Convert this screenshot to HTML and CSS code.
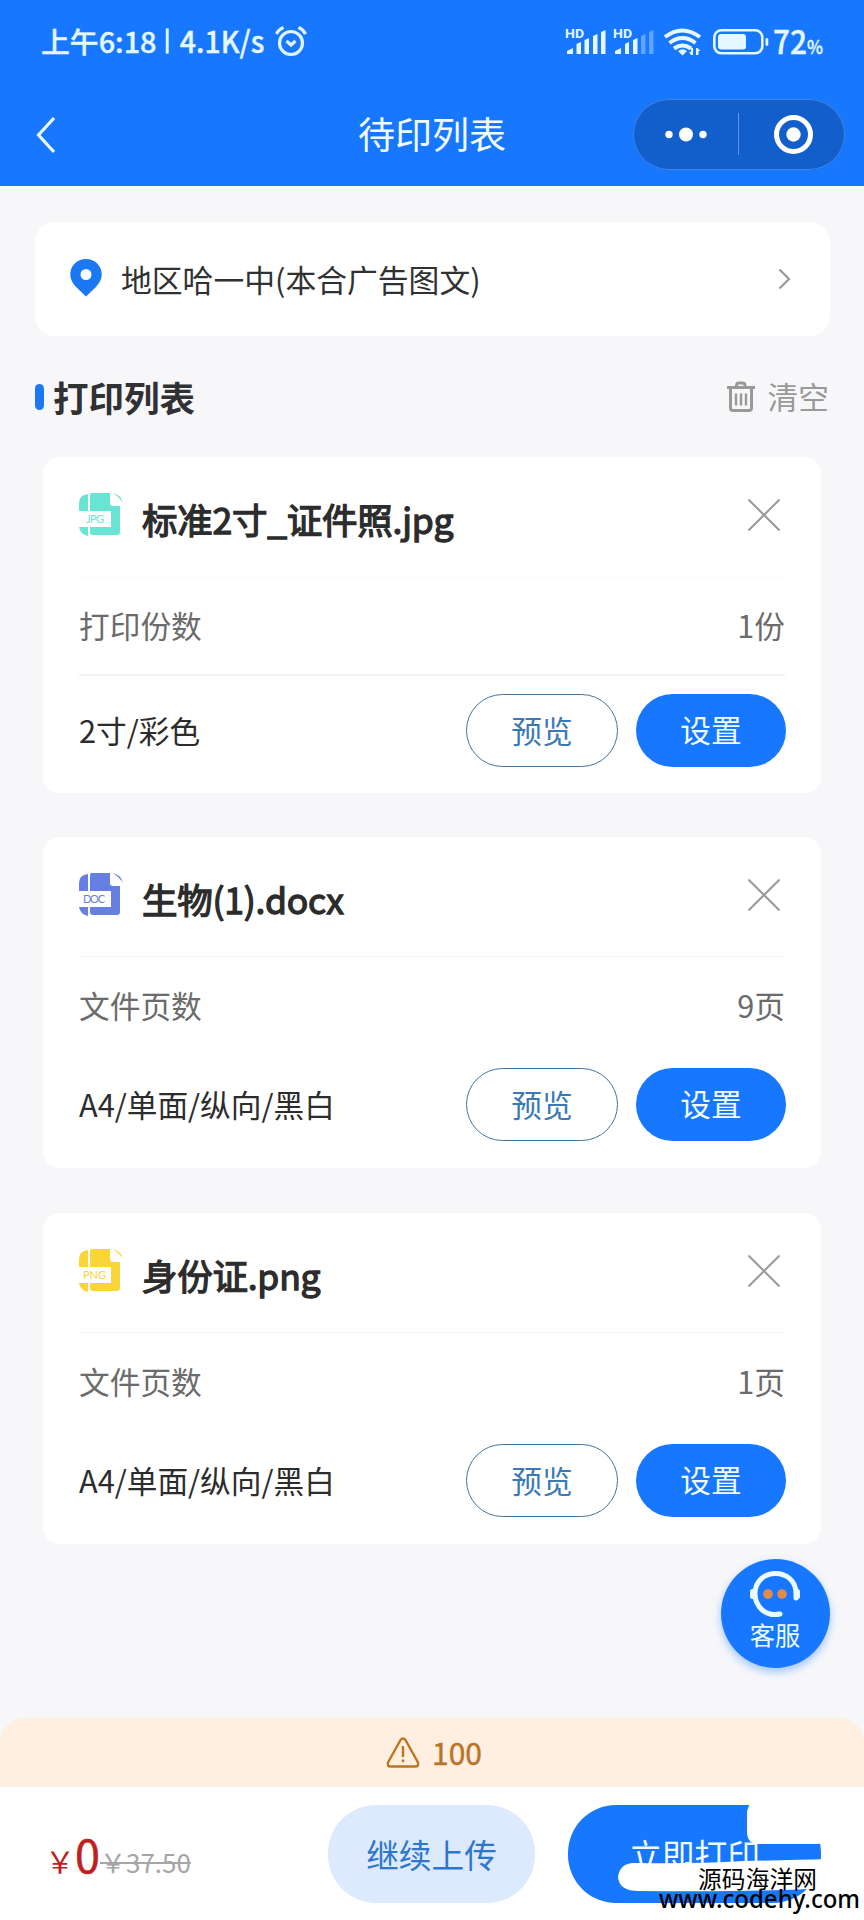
FILE: index.html
```html
<!DOCTYPE html>
<html lang="zh-CN">
<head>
<meta charset="utf-8">
<title>待印列表</title>
<link rel="stylesheet" href="styles.css">
</head>
<body>
<header class="header">
  <div class="status">
    <svg class="status-left" width="240" height="60" viewBox="0 0 240 60">
      <text class="status-text" x="-1" y="41" font-size="29" textLength="119" lengthAdjust="spacingAndGlyphs">上午6:18</text>
      <rect x="127.500" y="16" width="3" height="26" fill="#dff6ff"/>
      <text class="status-text" x="142" y="41" font-size="31" textLength="87" lengthAdjust="spacingAndGlyphs">4.1K/s</text>
    </svg>
    <svg class="status-alarm" width="32" height="32" viewBox="0 0 32 32" fill="none" stroke="#dff6ff" stroke-width="3.200">
      <circle cx="16" cy="17" r="11.500"/>
      <path d="M11.500 15l4.500 4 4.500-4"/>
      <path d="M1.500 8q2-4.500 7-6.500M30.500 8q-2-4.500-7-6.500"/>
    </svg>
    <svg class="status-right" width="262" height="60" viewBox="0 -16 262 60" fill="#e4f8ff">
      <text class="hd" x="0" y="10" font-size="12.500" textLength="19" lengthAdjust="spacingAndGlyphs">HD</text>
      <path d="M2 26v-3l6-3v6zM11.500 26v-10l4.500-2v12zM19.500 26v-14l4.500-2v16zM28 26V8l4.500-2v20zM36 26V4l4.500-2v24z"/>
      <text class="hd" x="48" y="10" font-size="12.500" textLength="19" lengthAdjust="spacingAndGlyphs">HD</text>
      <path d="M50 26v-3l6-3v6zM60 26v-10l4-2v12zM68 26v-14l4.500-2v16z"/>
      <path d="M76 26V8l4.500-2v20zM84 26V4l4.500-2v24z" opacity=".35"/>
      <g fill="none" stroke="#e4f8ff" stroke-width="4">
        <path d="M100 9q17-13 35 0M104.500 15q13-10 26 0M109 20.500q8.500-6 17 0"/>
      </g>
      <path d="M113 23q4.500-3.500 9 0l-4.500 4.500zM128 20v7h-2l-2-3h2v-4zM131 27v-7h1.500l3 3h-2v4z"/>
      <rect x="149.300" y="2.300" width="48" height="23" rx="7" fill="none" stroke="#e4f8ff" stroke-width="2.600"/>
      <rect x="153" y="6" width="28" height="15.500" rx="3"/>
      <rect x="200.500" y="10" width="2.800" height="8" rx="1.400"/>
      <text class="status-text" x="208" y="25.500" font-size="32" textLength="34" lengthAdjust="spacingAndGlyphs">72</text>
      <text class="status-text" x="242" y="25.500" font-size="19" textLength="16" lengthAdjust="spacingAndGlyphs">%</text>
    </svg>
  </div>
  <div class="nav">
    <svg class="back" width="22" height="38" viewBox="0 0 22 38" fill="none" stroke="#eafaff" stroke-width="3.200"><path d="M18 2L2.500 19 18 36"/></svg>
    <h1 class="nav-title">待印列表</h1>
    <div class="capsule">
      <svg width="212" height="71" viewBox="0 0 212 71" fill="#fff">
        <circle cx="36" cy="35.500" r="3.700"/><circle cx="53" cy="35.500" r="7"/><circle cx="70" cy="35.500" r="3.700"/>
        <rect x="105" y="14" width="1" height="42" opacity=".35"/>
        <circle cx="160.500" cy="35.500" r="17" fill="none" stroke="#fff" stroke-width="5"/><circle cx="160.500" cy="35.500" r="7.200"/>
      </svg>
    </div>
  </div>
</header>

<main class="main">
  <section class="address">
    <svg class="pin" width="32" height="38" viewBox="0 0 32 38"><path fill="#1a78f2" fill-rule="evenodd" d="M16 0C7 0 .3 6.800.3 15.200c0 5.200 2.500 8.800 6 13L16 37.500l9.700-9.300c3.500-4.200 6-7.800 6-13C31.700 6.800 25 0 16 0zm0 10a5.500 5.500 0 1 1 0 11 5.500 5.500 0 0 1 0-11z"/></svg>
    <span class="address-name">地区哈一中(本合广告图文)</span>
    <svg width="13" height="22" viewBox="0 0 13 22" fill="none" stroke="#999" stroke-width="2.200"><path d="M1.500 1.500L11 11l-9.500 9.500"/></svg>
  </section>

  <div class="section-head">
    <i class="section-bar"></i>
    <h2 class="section-title">打印列表</h2>
    <svg class="trash" width="28" height="32" viewBox="0 0 28 32" fill="none" stroke="#999">
      <path stroke-width="3" d="M0 6.500h28M9.500 6V4.500q0-2.500 2.500-2.500h3.500Q18 2 18 4.500V6M3.500 6v21q0 2.500 2.500 2.500h16q2.500 0 2.500-2.500V6"/>
      <path stroke-width="2.400" d="M9 12.500v12M14 12.500v12M19 12.500v12"/>
    </svg>
    <span class="clear">清空</span>
  </div>

  <article class="card card-tall">
    <div class="card-head">
      <svg class="file jpg" width="44" height="44" viewBox="0 0 44 44">
        <path d="M9 1v17H0v-8Q0 2 9 1zM0 34h9v9Q1 41 0 34zM12 0h19v10q0 3 3 3h7v26q0 3-3 3H14q-3 0-3-3v-5h21V18H11V3q0-3 1-3zM34 0q8 2 10 10-3-5-10-10z"/>
        <text x="7" y="30" font-size="11" textLength="18">JPG</text>
      </svg>
      <h3 class="card-title">标准2寸_证件照.jpg</h3>
      <svg class="close" width="32" height="32" viewBox="0 0 32 32"><path d="M.5.500l31 31M31.500.500l-31 31"/></svg>
    </div>
    <div class="card-row"><span>打印份数</span><span>1份</span></div>
    <div class="card-actions"><span class="spec">2寸/彩色</span><span class="btn btn-line">预览</span><span class="btn btn-fill">设置</span></div>
  </article>

  <article class="card">
    <div class="card-head ruled">
      <svg class="file doc" width="44" height="44" viewBox="0 0 44 44">
        <path d="M9 1v17H0v-8Q0 2 9 1zM0 34h9v9Q1 41 0 34zM12 0h19v10q0 3 3 3h7v26q0 3-3 3H14q-3 0-3-3v-5h21V18H11V3q0-3 1-3zM34 0q8 2 10 10-3-5-10-10z"/>
        <text x="4" y="30" font-size="11" textLength="22">DOC</text>
      </svg>
      <h3 class="card-title">生物(1).docx</h3>
      <svg class="close" width="32" height="32" viewBox="0 0 32 32"><path d="M.5.500l31 31M31.500.500l-31 31"/></svg>
    </div>
    <div class="card-row"><span>文件页数</span><span>9页</span></div>
    <div class="card-actions"><span class="spec">A4/单面/纵向/黑白</span><span class="btn btn-line">预览</span><span class="btn btn-fill">设置</span></div>
  </article>

  <article class="card">
    <div class="card-head ruled">
      <svg class="file png" width="44" height="44" viewBox="0 0 44 44">
        <path d="M9 1v17H0v-8Q0 2 9 1zM0 34h9v9Q1 41 0 34zM12 0h19v10q0 3 3 3h7v26q0 3-3 3H14q-3 0-3-3v-5h21V18H11V3q0-3 1-3zM34 0q8 2 10 10-3-5-10-10z"/>
        <text x="4" y="30" font-size="11" textLength="23">PNG</text>
      </svg>
      <h3 class="card-title">身份证.png</h3>
      <svg class="close" width="32" height="32" viewBox="0 0 32 32"><path d="M.5.500l31 31M31.500.500l-31 31"/></svg>
    </div>
    <div class="card-row"><span>文件页数</span><span>1页</span></div>
    <div class="card-actions"><span class="spec">A4/单面/纵向/黑白</span><span class="btn btn-line">预览</span><span class="btn btn-fill">设置</span></div>
  </article>
</main>

<aside class="service">
  <svg width="54" height="48" viewBox="0 0 54 48" fill="none" stroke="#eafcff">
    <path stroke-width="5" stroke-linecap="round" d="M31 44C16 47 6 36 6 23.500 6 11 15.500 3.500 26.500 3.500S47 11 47 23v5"/>
    <path stroke-width="5" stroke-linecap="round" d="M3.500 21.500v5M48.500 21.500v5"/>
    <circle cx="19" cy="24" r="4.800" fill="#e5894a" stroke="none"/><circle cx="33" cy="24" r="4.800" fill="#e5894a" stroke="none"/>
  </svg>
  <span class="service-label">客服</span>
</aside>

<footer class="footer">
  <div class="notice">
    <svg width="34" height="31" viewBox="0 0 34 31" fill="none" stroke="#c0731f" stroke-width="2.400" stroke-linejoin="round">
      <path d="M14.500 3Q17 0 19.500 3L32 25.500Q33 29.500 29.500 29.500h-25Q1 29.500 2 25.500zM17 9v11M17 22.500v2.800"/>
    </svg>
    <span>100</span>
  </div>
  <div class="pay">
    <div class="price"><span class="yen">￥</span><span class="amount">0</span><s class="origin">￥37.50</s></div>
    <div class="upload">继续上传</div>
    <div class="print">立即打印</div>
  </div>
  <svg class="overlay" width="264" height="133" viewBox="0 0 264 133">
    <path fill="#fff" d="M150 16h78v38q-5 3-12 3h-57q-12 0-12-12V24zM34 76q60 1 110-2 50-1 84-2l6 5v23q-20 2-50 3-60 2-145 1-20 0-21-14 2-14 16-14z"/>
    <text class="mark" x="98" y="101" font-size="23.700" textLength="119">源码海洋网</text>
    <text class="mark mark-url" x="59" y="121" font-size="25.500" textLength="201" lengthAdjust="spacingAndGlyphs">www.codehy.com</text>
  </svg>
</footer>
</body>
</html>
```

FILE: styles.css
```css
* { box-sizing: border-box; }
body {
  margin: 0;
  width: 864px;
  height: 1920px;
  position: relative;
  display: flex;
  flex-direction: column;
  overflow: hidden;
  background: #f7f7fa;
  color: #2c2c2c;
  font-family: "Noto Sans CJK SC", sans-serif;
  font-size: 30.7px;
  line-height: 41px;
}
h1, h2, h3 { margin: 0; }
svg { display: block; flex: none; }

.header { height: 186px; flex: none; background: #1777ff; }
.status { display: flex; height: 84px; padding: 12px 37px 0 42px; }
.status-left { width: 233px; overflow: visible; }
.status-alarm { margin-top: 14px; }
.status-right { margin-left: auto; overflow: visible; }
.status-text {
  fill: #e4f8ff;
  stroke: #e4f8ff;
  stroke-width: .4px;
  font-family: "Noto Sans CJK SC", sans-serif;
  font-weight: 500;
}
.hd { font-family: Roboto, sans-serif; font-weight: 700; }
.nav {
  display: grid;
  grid-template-columns: 1fr auto 1fr;
  align-items: center;
  height: 102px;
  padding: 0 19px 0 36px;
}
.nav-title { font-size: 37px; font-weight: 400; color: #f2fcff; line-height: 50px; padding-right: 17px; margin-top: -4px; }
.capsule {
  justify-self: end;
  width: 212px;
  height: 71px;
  margin-top: -1px;
  border-radius: 36px;
  background: #125fcc;
  box-shadow: inset 0 0 0 1px #3f86e4;
}

.main { display: flex; flex-direction: column; padding: 36px 35px 0; }
.address {
  display: flex;
  align-items: center;
  height: 114px;
  width: 795px;
  padding: 0 39px 0 35px;
  border-radius: 20px;
  background: #fff;
}
.pin { margin-top: -3px; }
.address-name { flex: 1; margin-left: 19px; margin-top: -2px; font-size: 30.8px; color: #303133; }

.section-head { display: flex; align-items: center; height: 121px; width: 794px; }
.section-bar { width: 9px; height: 26px; border-radius: 5px; background: #1a78f2; }
.section-title { flex: 1; margin-left: 9px; font-size: 35.5px; font-weight: 700; line-height: 50px; color: #303133; }
.trash { margin-right: 13px; }
.clear { margin-top: -2px; color: #999; }

.card {
  display: flex;
  flex-direction: column;
  height: 331px;
  width: 778px;
  margin: 0 0 45px 8px;
  padding: 0 36px;
  border-radius: 16px;
  background: #fff;
}
.card-tall { height: 336px; margin-bottom: 44px; }
.card-head { display: flex; align-items: center; height: 120px; padding-bottom: 3px; border-bottom: 1px solid #fbfbfc; }
.ruled { border-bottom-color: #f6f6f7; }
.card-title {
  flex: 1;
  margin-left: 19px;
  padding-top: 7px;
  font-size: 35.5px;
  font-weight: 400;
  letter-spacing: -.25px;
  -webkit-text-stroke: 1.3px #2c2c2c;
  line-height: 48px;
}
.close { margin-right: 5px; stroke: #999; stroke-width: 2px; fill: none; }
.file text { font-family: Lato, sans-serif; }
.jpg { fill: #69e3d3; }
.doc { fill: #6680e2; }
.png { fill: #fbd437; }
.card-row { display: flex; justify-content: space-between; height: 93px; padding-top: 27px; color: #6b6b6b; border-bottom: 1px solid #fcfcfd; }
.card-tall .card-row { height: 99px; border-bottom: 2px solid #f1f1f2; }
.card-actions { display: flex; align-items: center; height: 73px; margin-top: 18px; }
.spec { flex: 1; margin-top: -2px; }
.btn { width: 152px; height: 73px; border-radius: 37px; line-height: 73px; text-align: center; }
.btn-line { border: 1.500px solid #41749f; line-height: 70px; color: #3b79b5; margin-right: 18px; }
.btn-fill { width: 150px; margin-right: -1px; line-height: 69px; background: #1777ff; color: #f0fcff; }

.service {
  position: absolute;
  left: 721px;
  top: 1559px;
  width: 109px;
  height: 109px;
  padding-top: 11px;
  border-radius: 50%;
  display: flex;
  flex-direction: column;
  align-items: center;
  background: #1777ff;
  box-shadow: 0 4px 9px #1777ff66;
}
.service-label { font-size: 25.3px; line-height: 32px; margin: 0 1px 0 0; color: #eafcff; }

.footer { position: absolute; left: 0; top: 1718px; width: 864px; height: 202px; background: #fff; }
.notice {
  display: flex;
  justify-content: center;
  height: 69px;
  padding: 19px 0 0 4px;
  gap: 12px;
  border-radius: 24px 24px 0 0;
  background: #ffefe1;
  box-shadow: 0 -24px 0 0 #f7f7fa;
  color: #b87428;
  font-size: 30px;
  -webkit-text-stroke: .4px #b87428;
  line-height: 31px;
}
.pay { display: flex; height: 133px; padding: 18px 43px 0 45px; }
.price { display: flex; align-items: baseline; width: 283px; height: 97px; padding-top: 16px; line-height: 66px; color: #bf1f1f; }
.yen { font-size: 30px; }
.amount { font-size: 45px; -webkit-text-stroke: .5px #bf1f1f; }
.origin { font-size: 26px; color: #a6a6a6; text-decoration-thickness: 2px; }
.upload, .print { height: 98px; border-radius: 48px; font-size: 32.7px; line-height: 97px; text-align: center; }
.upload { width: 207px; background: #dde9fd; color: #2d76cc; }
.print { width: 253px; margin-left: 33px; background: #1777ff; color: #f0fcff; }
.overlay { position: absolute; left: 600px; top: 69px; overflow: visible; }
.mark { font-family: "Noto Sans CJK SC", sans-serif; fill: #000; }
.mark-url { font-family: "Noto Sans", sans-serif; font-weight: 500; }
```
